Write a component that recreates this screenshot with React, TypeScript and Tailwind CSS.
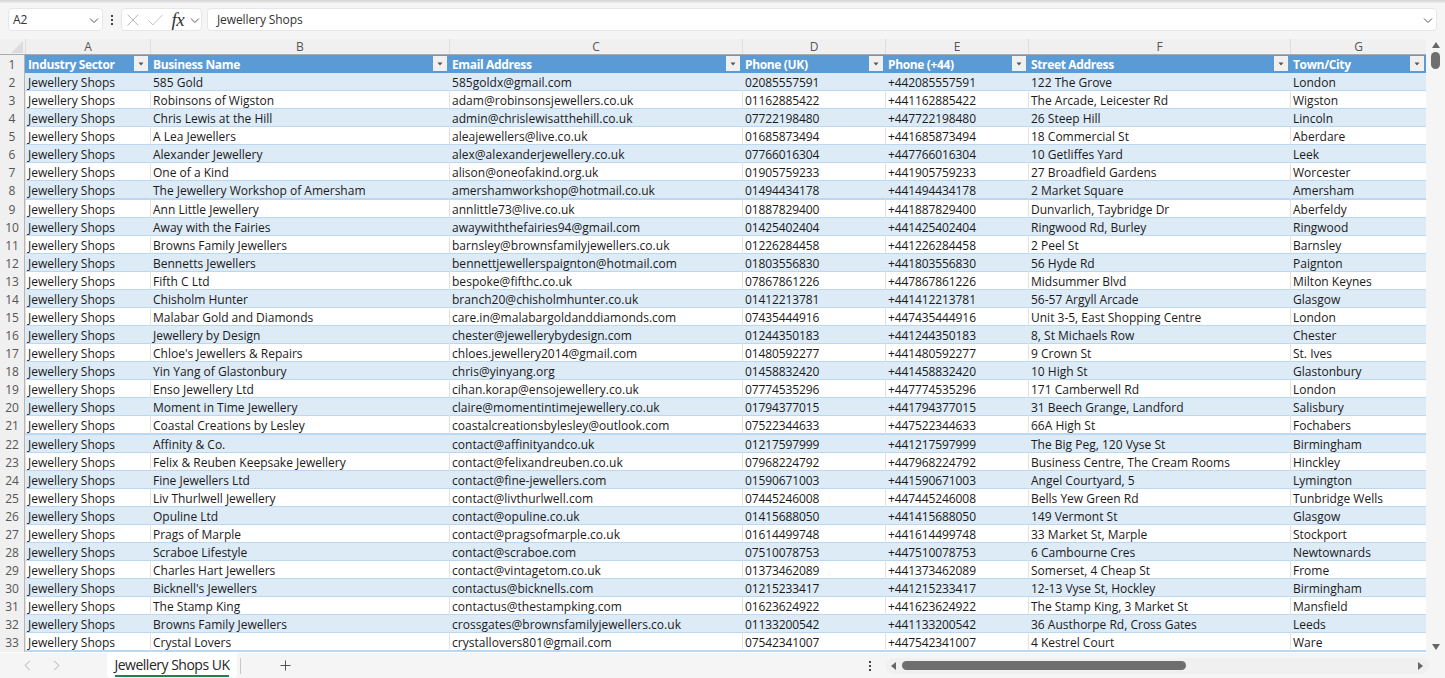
const DATA = `585 Gold|585goldx@gmail.com|02085557591|+442085557591|122 The Grove|London
Robinsons of Wigston|adam@robinsonsjewellers.co.uk|01162885422|+441162885422|The Arcade, Leicester Rd|Wigston
Chris Lewis at the Hill|admin@chrislewisatthehill.co.uk|07722198480|+447722198480|26 Steep Hill|Lincoln
A Lea Jewellers|aleajewellers@live.co.uk|01685873494|+441685873494|18 Commercial St|Aberdare
Alexander Jewellery|alex@alexanderjewellery.co.uk|07766016304|+447766016304|10 Getliffes Yard|Leek
One of a Kind|alison@oneofakind.org.uk|01905759233|+441905759233|27 Broadfield Gardens|Worcester
The Jewellery Workshop of Amersham|amershamworkshop@hotmail.co.uk|01494434178|+441494434178|2 Market Square|Amersham
Ann Little Jewellery|annlittle73@live.co.uk|01887829400|+441887829400|Dunvarlich, Taybridge Dr|Aberfeldy
Away with the Fairies|awaywiththefairies94@gmail.com|01425402404|+441425402404|Ringwood Rd, Burley|Ringwood
Browns Family Jewellers|barnsley@brownsfamilyjewellers.co.uk|01226284458|+441226284458|2 Peel St|Barnsley
Bennetts Jewellers|bennettjewellerspaignton@hotmail.com|01803556830|+441803556830|56 Hyde Rd|Paignton
Fifth C Ltd|bespoke@fifthc.co.uk|07867861226|+447867861226|Midsummer Blvd|Milton Keynes
Chisholm Hunter|branch20@chisholmhunter.co.uk|01412213781|+441412213781|56-57 Argyll Arcade|Glasgow
Malabar Gold and Diamonds|care.in@malabargoldanddiamonds.com|07435444916|+447435444916|Unit 3-5, East Shopping Centre|London
Jewellery by Design|chester@jewellerybydesign.com|01244350183|+441244350183|8, St Michaels Row|Chester
Chloe's Jewellers & Repairs|chloes.jewellery2014@gmail.com|01480592277|+441480592277|9 Crown St|St. Ives
Yin Yang of Glastonbury|chris@yinyang.org|01458832420|+441458832420|10 High St|Glastonbury
Enso Jewellery Ltd|cihan.korap@ensojewellery.co.uk|07774535296|+447774535296|171 Camberwell Rd|London
Moment in Time Jewellery|claire@momentintimejewellery.co.uk|01794377015|+441794377015|31 Beech Grange, Landford|Salisbury
Coastal Creations by Lesley|coastalcreationsbylesley@outlook.com|07522344633|+447522344633|66A High St|Fochabers
Affinity & Co.|contact@affinityandco.uk|01217597999|+441217597999|The Big Peg, 120 Vyse St|Birmingham
Felix & Reuben Keepsake Jewellery|contact@felixandreuben.co.uk|07968224792|+447968224792|Business Centre, The Cream Rooms|Hinckley
Fine Jewellers Ltd|contact@fine-jewellers.com|01590671003|+441590671003|Angel Courtyard, 5|Lymington
Liv Thurlwell Jewellery|contact@livthurlwell.com|07445246008|+447445246008|Bells Yew Green Rd|Tunbridge Wells
Opuline Ltd|contact@opuline.co.uk|01415688050|+441415688050|149 Vermont St|Glasgow
Prags of Marple|contact@pragsofmarple.co.uk|01614499748|+441614499748|33 Market St, Marple|Stockport
Scraboe Lifestyle|contact@scraboe.com|07510078753|+447510078753|6 Cambourne Cres|Newtownards
Charles Hart Jewellers|contact@vintagetom.co.uk|01373462089|+441373462089|Somerset, 4 Cheap St|Frome
Bicknell's Jewellers|contactus@bicknells.com|01215233417|+441215233417|12-13 Vyse St, Hockley|Birmingham
The Stamp King|contactus@thestampking.com|01623624922|+441623624922|The Stamp King, 3 Market St|Mansfield
Browns Family Jewellers|crossgates@brownsfamilyjewellers.co.uk|01133200542|+441133200542|36 Austhorpe Rd, Cross Gates|Leeds
Crystal Lovers|crystallovers801@gmail.com|07542341007|+447542341007|4 Kestrel Court|Ware`
  .split("\n")
  .map((l) => ["Jewellery Shops", ...l.split("|")]);

const COLS = ["A", "B", "C", "D", "E", "F", "G"];
const HEADS = ["Industry Sector", "Business Name", "Email Address", "Phone (UK)", "Phone (+44)", "Street Address", "Town/City"];
const GRID = "grid grid-cols-[25px_125px_299px_293px_143px_143px_262px_136px]";
const TRACK = ["tracking-normal", "tracking-normal", "tracking-[0.03px]", "tracking-[-0.1px]", "tracking-[-0.1px]", "tracking-normal", "tracking-normal"];

function Chevron({ className = "" }: { className?: string }) {
  return (
    <svg viewBox="0 0 12 12" className={className} fill="none" stroke="#555" strokeWidth="1">
      <path d="M2 4.5 L6 8.5 L10 4.5" />
    </svg>
  );
}

function Dots({ className = "" }: { className?: string }) {
  return (
    <div className={`flex flex-col gap-[2px] ${className}`}>
      <div className="w-[2px] h-[2px] bg-[#444]" />
      <div className="w-[2px] h-[2px] bg-[#444]" />
      <div className="w-[2px] h-[2px] bg-[#444]" />
    </div>
  );
}

function FilterBtn() {
  return (
    <div className="absolute right-[2px] top-[1px] w-[14px] h-[15px] bg-[#f0f0f0] flex items-center justify-center">
      <svg viewBox="0 0 6 4" className="w-[6px] h-[4px]">
        <path d="M0.5 0.5 H5.5 L3 3.5 Z" fill="#555" />
      </svg>
    </div>
  );
}

export default function App() {
  return (
    <div className="w-[1445px] h-[678px] overflow-hidden bg-[#f5f5f5] flex flex-col text-[#1f1f1f] font-['Open_Sans',sans-serif]">
      <div className="h-[3px] bg-gradient-to-b from-[#d4d4d4] to-[#ececec]" />
      {/* Formula bar */}
      <div className="h-[36px] flex items-center pl-[8px] pr-[8px] pb-[3px]">
        <div className="w-[95px] h-[23px] bg-white rounded-[4px] border border-[#e6e6e6] flex items-center justify-between pl-[4px] pr-[2px] text-[12px] text-[#333]">
          <span>A2</span>
          <Chevron className="w-[12px] h-[12px]" />
        </div>
        <Dots className="ml-[8px] mr-[8px]" />
        <div className="w-[81px] h-[23px] bg-white rounded-[4px] border border-[#e6e6e6] flex items-center pl-[5px]">
          <svg viewBox="0 0 12 12" className="w-[12px] h-[12px]" fill="none" stroke="#b0b0b0" strokeWidth="1">
            <path d="M0.5 0.5 L11.5 11.5 M11.5 0.5 L0.5 11.5" />
          </svg>
          <svg viewBox="0 0 15 12" className="ml-[9px] w-[15px] h-[12px]" fill="none" stroke="#c4c4c4" strokeWidth="1">
            <path d="M0.5 6.5 L5 11 L14.5 1" />
          </svg>
          <span className="ml-[9px] w-[14px] font-['Liberation_Serif',serif] italic text-[19px] leading-none text-[#333] tracking-[-0.5px]">fx</span>
          <Chevron className="ml-[4px] w-[12px] h-[12px]" />
        </div>
        <div className="ml-[5px] flex-1 h-[23px] bg-white rounded-[4px] border border-[#e6e6e6] flex items-center justify-between pl-[9px] pr-[2px] text-[12px] text-[#333]">
          <span className="tracking-[-0.1px]">Jewellery Shops</span>
          <Chevron className="w-[12px] h-[12px]" />
        </div>
      </div>

      {/* Sheet */}
      <div className="flex h-[614px]">
        <div className="w-[1426px] bg-white overflow-hidden text-[12px]">
          <div className={`${GRID} h-[16px] bg-[#f0f0f0] border-b border-[#ababab]`}>
            <div className="relative">
              <svg viewBox="0 0 16 16" className="absolute right-[2px] bottom-[1px] w-[12px] h-[12px]">
                <path d="M16 0 V16 H0 Z" fill="#dcdcdc" />
              </svg>
            </div>
            {COLS.map((c) => (
              <div key={c} className="border-l border-[#dedede] flex items-center justify-center text-[#555] leading-[15px]">
                {c}
              </div>
            ))}
          </div>
          <div className={`${GRID} h-[18px] bg-[#5b9bd5] text-white font-bold tracking-[-0.35px]`}>
            <div className="bg-[#f0f0f0] text-[#555] font-normal tracking-normal flex items-center justify-center pt-[1px] border-r border-[#b5b5b5]">1</div>
            {HEADS.map((h) => (
              <div key={h} className="relative flex items-center pl-[3px] pt-[1px] whitespace-nowrap overflow-hidden">
                {h}
                <FilterBtn />
              </div>
            ))}
          </div>
          {DATA.map((row, i) => (
            <div key={i} className={`${GRID} h-[18.08px]`}>
              <div className="bg-[#f0f0f0] text-[#555] flex items-center justify-center pt-[1px] border-r border-[#b5b5b5]">{i + 2}</div>
              {row.map((cell, j) => (
                <div
                  key={j}
                  className={`flex items-center pl-[2px] pt-[3px] whitespace-nowrap overflow-hidden text-[#1a1a1a] border-l border-b-2 border-b-[#bcd7f0] ${TRACK[j]} ${
                    i % 2 === 0 ? "bg-[#ddebf7] border-l-transparent" : "bg-white border-l-[#e2e2e2]"
                  }`}
                >
                  {cell}
                </div>
              ))}
            </div>
          ))}
        </div>
        {/* Vertical scrollbar */}
        <div className="w-[19px] flex flex-col items-center pt-[3px] pb-[3px]">
          <svg viewBox="0 0 8 6" className="w-[8px] h-[6px]"><path d="M4 0 L8 6 H0 Z" fill="#666" /></svg>
          <div className="mt-[4px] w-[9px] h-[17px] rounded-full bg-[#6e6e6e]" />
          <svg viewBox="0 0 8 6" className="mt-auto w-[8px] h-[6px]"><path d="M4 6 L8 0 H0 Z" fill="#666" /></svg>
        </div>
      </div>

      {/* Bottom bar */}
      <div className="flex-1 flex items-center">
        <svg viewBox="0 0 8 12" className="ml-[23px] w-[8px] h-[11px]" fill="none" stroke="#a8a8a8" strokeWidth="1"><path d="M7 1 L2 6 L7 11" /></svg>
        <svg viewBox="0 0 8 12" className="ml-[22px] w-[8px] h-[11px]" fill="none" stroke="#a8a8a8" strokeWidth="1"><path d="M1 1 L6 6 L1 11" /></svg>
        <div className="ml-[46px] w-[130px] h-[25px] bg-white rounded-b-[4px] flex flex-col items-center justify-end">
          <span className="text-[14px] leading-[20px] mb-[1px] tracking-[-0.5px] text-[#262626] border-b-2 border-[#1e8449]">Jewellery Shops UK</span>
        </div>
        <div className="ml-[3px] w-px h-[16px] bg-[#c8c8c8]" />
        <svg viewBox="0 0 12 12" className="ml-[39px] w-[11px] h-[11px]" fill="none" stroke="#444" strokeWidth="1"><path d="M6 0.5 V11.5 M0.5 6 H11.5" /></svg>
        <Dots className="ml-[578px]" />
        <div className="ml-[15px] w-[543px] h-[16px] rounded-full bg-[#f0f0f0] flex items-center pl-[5px] pr-[6px]">
          <svg viewBox="0 0 5 8" className="w-[5px] h-[8px]"><path d="M0 4 L5 0 V8 Z" fill="#666" /></svg>
          <div className="ml-[6px] w-[284px] h-[9px] rounded-full bg-[#6e6e6e]" />
          <svg viewBox="0 0 5 8" className="ml-auto w-[5px] h-[8px]"><path d="M5 4 L0 0 V8 Z" fill="#666" /></svg>
        </div>
      </div>
    </div>
  );
}
